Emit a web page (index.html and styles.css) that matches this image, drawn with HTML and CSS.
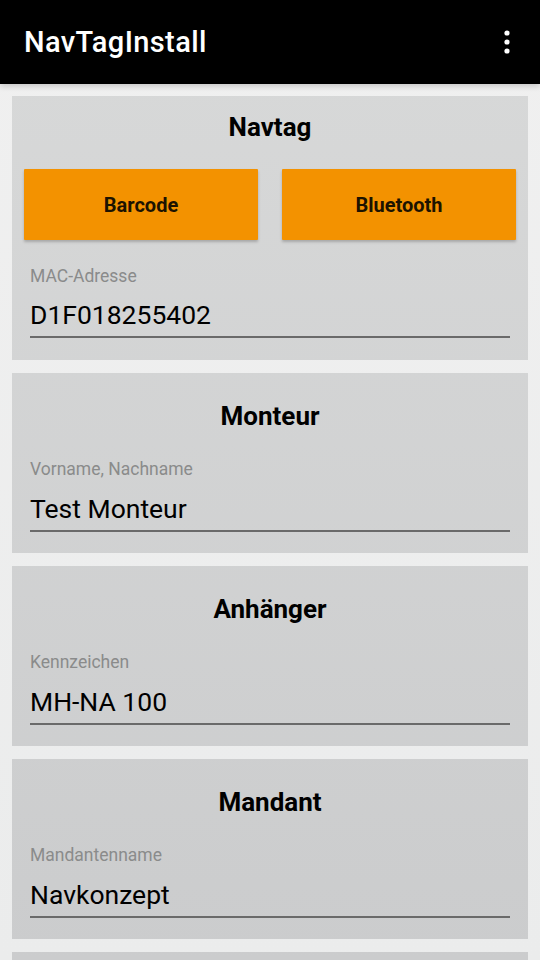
FILE: index.html
```html
<!DOCTYPE html>
<html lang="de">
<head>
  <meta charset="UTF-8" />
  <meta name="viewport" content="width=device-width,initial-scale=1.0" />
  <title>NavTagInstall</title>
  <link rel="stylesheet" href="styles.css">
</head>
<body>
  <header class="appbar">
    <h1 class="appbar-title">NavTagInstall</h1>
    <button class="overflow" aria-label="Mehr Optionen">
      <svg width="10" height="28" viewBox="0 0 10 28">
        <circle cx="5" cy="5" r="2.6" fill="#fff"/>
        <circle cx="5" cy="14" r="2.6" fill="#fff"/>
        <circle cx="5" cy="23" r="2.6" fill="#fff"/>
      </svg>
    </button>
  </header>

  <main class="content">
    <section class="card card-first">
      <h2 class="card-title">Navtag</h2>
      <div class="actions">
        <button class="btn">Barcode</button>
        <button class="btn">Bluetooth</button>
      </div>
      <label class="field">
        <span class="field-label">MAC-Adresse</span>
        <input class="field-input" type="text" value="D1F018255402" />
      </label>
    </section>

    <section class="card">
      <h2 class="card-title">Monteur</h2>
      <label class="field">
        <span class="field-label">Vorname, Nachname</span>
        <input class="field-input" type="text" value="Test Monteur" />
      </label>
    </section>

    <section class="card">
      <h2 class="card-title">Anhänger</h2>
      <label class="field">
        <span class="field-label">Kennzeichen</span>
        <input class="field-input" type="text" value="MH-NA 100" />
      </label>
    </section>

    <section class="card">
      <h2 class="card-title">Mandant</h2>
      <label class="field">
        <span class="field-label">Mandantenname</span>
        <input class="field-input" type="text" value="Navkonzept" />
      </label>
    </section>

    <section class="card card-empty"></section>
  </main>
</body>
</html>
```

FILE: styles.css
```css
* { box-sizing: border-box; }

body {
  margin: 0;
  background: linear-gradient(#f0f0f0, #ebecec) fixed;
  font-family: Roboto, "Liberation Sans", sans-serif;
  color: #000;
}

.appbar {
  height: 84px;
  background: #000;
  display: flex;
  align-items: center;
  justify-content: space-between;
  padding: 0 24px;
  box-shadow: 0 2px 6px rgba(0,0,0,0.18);
  position: relative;
}
.appbar-title {
  margin: 0;
  color: #fff;
  font-size: 29px;
  font-weight: 500;
  letter-spacing: 0.4px;
}
.overflow {
  background: none;
  border: none;
  padding: 0;
  margin-right: 4px;
  display: flex;
}

.content {
  display: flex;
  flex-direction: column;
  gap: 13px;
  padding: 12px;
}

.card {
  height: 180px;
  background: linear-gradient(#d8d9d9, #cbcccd) fixed;
  padding: 27px 12px 0;
}
.card-first {
  height: 264px;
  padding-top: 15px;
}

.card-title {
  margin: 0 0 27px;
  text-align: center;
  font-size: 26px;
  line-height: 32px;
  font-weight: 700;
}
.card-first .card-title { margin-bottom: 26px; }

.actions {
  display: grid;
  grid-template-columns: 1fr 1fr;
  gap: 24px;
  margin-bottom: 26px;
}
.btn {
  height: 71px;
  padding-top: 2px;
  background: #f39200;
  border: none;
  border-radius: 1px;
  font-family: inherit;
  font-size: 20px;
  font-weight: 700;
  color: #1c1300;
  box-shadow: 0 2px 3px rgba(0,0,0,0.22);
}

.field {
  display: flex;
  flex-direction: column;
  margin: 0 6px;
}
.field-label {
  font-size: 17.5px;
  line-height: 20px;
  color: #8a8b8b;
  margin-bottom: 13px;
}
.card-first .field-label { margin-bottom: 12px; }
.field-input {
  font-family: inherit;
  font-size: 26.5px;
  line-height: 32px;
  height: 40px;
  padding: 0 0 6px;
  border: none;
  border-bottom: 2px solid #6a6a6a;
  background: transparent;
  color: #000;
  outline: none;
}
```
